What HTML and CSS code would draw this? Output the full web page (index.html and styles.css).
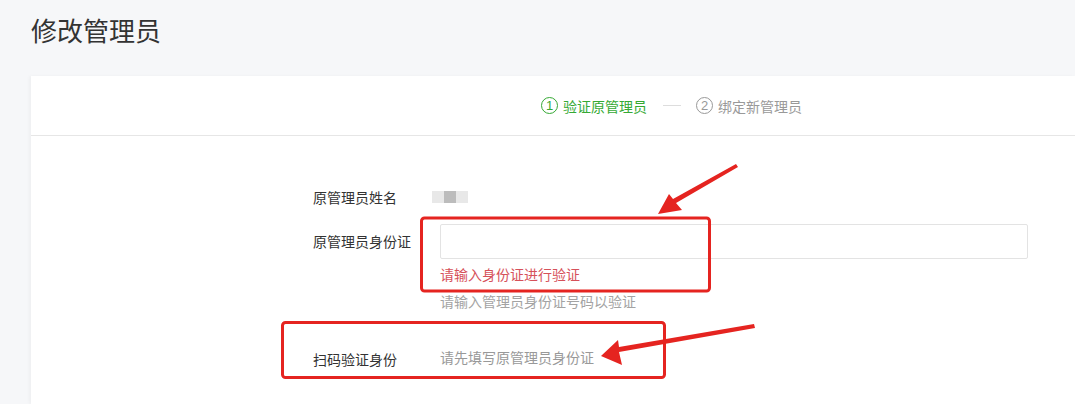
FILE: index.html
```html
<!DOCTYPE html>
<html lang="zh-CN">
<head>
  <meta charset="UTF-8">
  <title>修改管理员</title>
  <link rel="stylesheet" href="styles.css">
</head>
<body>

  <h1 class="page-title">修改管理员</h1>

  <div class="card">
    <div class="steps">
      <div class="step active"><span class="num">1</span>验证原管理员</div>
      <div class="step-line"></div>
      <div class="step"><span class="num">2</span>绑定新管理员</div>
    </div>

    <div class="form">
      <div class="row row-name">
        <div class="label">原管理员姓名</div>
        <div class="value">
          <span class="blur"><i></i><i class="dark"></i><i></i></span>
        </div>
      </div>

      <div class="row row-id">
        <div class="label">原管理员身份证</div>
        <div class="value">
          <input type="text" class="text-input">
          <div class="error">请输入身份证进行验证</div>
          <div class="hint">请输入管理员身份证号码以验证</div>
        </div>
      </div>

      <div class="row row-scan">
        <div class="label">扫码验证身份</div>
        <div class="value muted">请先填写原管理员身份证</div>
      </div>
    </div>
  </div>

  <!-- 标注 -->
  <svg class="marks" width="1075" height="404" viewBox="0 0 1075 404">
    <rect x="421.5" y="218" width="288" height="73" rx="3" fill="none" stroke="#e52420" stroke-width="3"/>
    <rect x="282.5" y="322.5" width="382" height="55" rx="3" fill="none" stroke="#e52420" stroke-width="3"/>
    <path d="M736 164 L738 167 L676 203 L682 210 L658 214 L669 194 L673 199 Z" fill="#e52420"/>
    <path d="M754 324 L755 328 L619 352 L622 365 L601 356 L618 340 L619 347 Z" fill="#e52420"/>
  </svg>

</body>
</html>
```

FILE: styles.css
```css
body {
  margin: 0;
  padding: 0 0 0 31px;
  height: 404px;
  background: #f6f7f9;
  font-family: "Microsoft YaHei", "Noto Sans CJK SC", sans-serif;
  color: #333;
  overflow: hidden;
}

.page-title {
  margin: 0;
  padding-top: 12px;
  height: 76px;
  box-sizing: border-box;
  font-size: 26px;
  font-weight: normal;
  line-height: 36px;
  color: #333;
}

.card {
  background: #fff;
  height: 328px;
  box-shadow: -2px 0 3px rgba(0, 0, 0, 0.03);
}

.steps {
  height: 59px;
  border-bottom: 1px solid #e6e6e6;
  display: flex;
  align-items: center;
  padding-left: 510px;
  font-size: 14px;
  color: #999;
}

.step {
  display: flex;
  align-items: center;
}

.step .num {
  width: 15px;
  height: 15px;
  border: 1px solid #999;
  border-radius: 50%;
  font-size: 13px;
  line-height: 15px;
  text-align: center;
  margin-right: 5px;
  font-family: "Liberation Sans", sans-serif;
}

.step.active {
  color: #35a934;
}

.step.active .num {
  border-color: #35a934;
}

.step-line {
  width: 18px;
  height: 1px;
  background: #ddd;
  margin: 0 15px 0 16px;
}

.form {
  padding: 50px 0 0 282px;
  font-size: 14px;
}

.row {
  display: flex;
}

.label {
  width: 127px;
  flex-shrink: 0;
  color: #333;
}

.value {
  flex: 1;
}

.row-name {
  line-height: 22px;
  height: 38px;
}

.blur {
  display: inline-flex;
  margin-left: -8px;
  margin-top: 5px;
  vertical-align: top;
}

.blur i {
  width: 12px;
  height: 12px;
  background: #e8e8e8;
}

.blur i.dark {
  background: #bcbcbc;
}

.row-id .label {
  line-height: 35px;
}

.text-input {
  display: block;
  width: 588px;
  height: 35px;
  box-sizing: border-box;
  border: 1px solid #e3e3e3;
  border-radius: 2px;
  margin: 0;
  outline: none;
}

.error {
  color: #d6515a;
  line-height: 20px;
  margin-top: 5px;
}

.hint {
  color: #a3a3a3;
  line-height: 20px;
  margin-top: 7px;
}

.row-scan {
  margin-top: 36px;
  line-height: 20px;
}

.row-scan .label {
  padding-top: 2px;
}

.muted {
  color: #999;
}

.marks {
  position: absolute;
  left: 0;
  top: 0;
  pointer-events: none;
}
```
